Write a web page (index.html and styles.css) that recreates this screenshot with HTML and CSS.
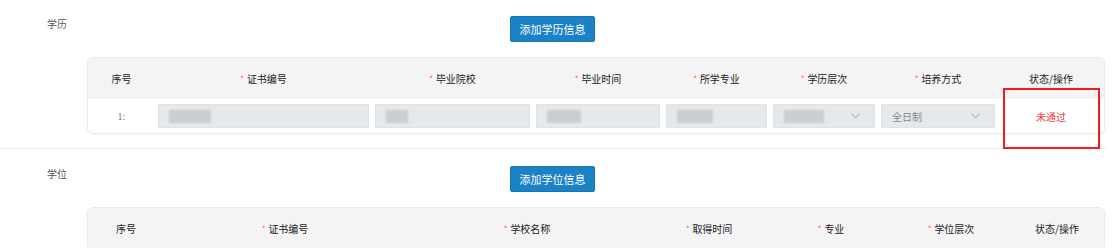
FILE: index.html
```html
<!DOCTYPE html>
<html>
<head>
    <meta charset="utf-8">
    <link rel="stylesheet" href="styles.css">
</head>
<body>
    <div class="page">
        <div class="section">
            <div class="section-head">
                <span class="section-label">学历</span>
                <button class="add-btn">添加学历信息</button>
            </div>
            <div class="card">
                <div class="grid grid-edu head">
                    <div class="cell">序号</div>
                    <div class="cell"><i>*</i>证书编号</div>
                    <div class="cell"><i>*</i>毕业院校</div>
                    <div class="cell"><i>*</i>毕业时间</div>
                    <div class="cell"><i>*</i>所学专业</div>
                    <div class="cell"><i>*</i>学历层次</div>
                    <div class="cell"><i>*</i>培养方式</div>
                    <div class="cell">状态/操作</div>
                </div>
                <div class="grid grid-edu row">
                    <div class="cell idx">1:</div>
                    <div class="cell"><div class="field"><span class="mosaic w42"></span></div></div>
                    <div class="cell"><div class="field"><span class="mosaic w22"></span></div></div>
                    <div class="cell"><div class="field"><span class="mosaic w34"></span></div></div>
                    <div class="cell"><div class="field"><span class="mosaic w36"></span></div></div>
                    <div class="cell">
                        <div class="field select"><span class="mosaic w40"></span>
                            <svg class="chev" width="9" height="6" viewBox="0 0 9 6"><path d="M0.5 0.8 L4.5 4.8 L8.5 0.8" fill="none" stroke="#9a9a9a" stroke-width="1"/></svg>
                        </div>
                    </div>
                    <div class="cell">
                        <div class="field select"><span class="val">全日制</span>
                            <svg class="chev" width="9" height="6" viewBox="0 0 9 6"><path d="M0.5 0.8 L4.5 4.8 L8.5 0.8" fill="none" stroke="#9a9a9a" stroke-width="1"/></svg>
                        </div>
                    </div>
                    <div class="cell status">未通过</div>
                </div>
            </div>
        </div>

        <div class="section">
            <div class="section-head">
                <span class="section-label">学位</span>
                <button class="add-btn">添加学位信息</button>
            </div>
            <div class="card">
                <div class="grid grid-deg head">
                    <div class="cell">序号</div>
                    <div class="cell"><i>*</i>证书编号</div>
                    <div class="cell"><i>*</i>学校名称</div>
                    <div class="cell"><i>*</i>取得时间</div>
                    <div class="cell"><i>*</i>专业</div>
                    <div class="cell"><i>*</i>学位层次</div>
                    <div class="cell">状态/操作</div>
                </div>
            </div>
        </div>

        <!-- annotation frame drawn over the status cell -->
        <div class="mark"></div>
    </div>
</body>
</html>
```

FILE: styles.css
```css
* {margin: 0; padding: 0; box-sizing: border-box;}
body {
    background: #fff;
    font-family: "Noto Sans CJK SC", "Liberation Sans", sans-serif;
    color: #333;
}

.page {
    width: 1105px;
    position: relative;
}

.section {
    padding: 16px 0 14px;
    border-bottom: 1px dotted #dcdcdc;
}
.section + .section {
    padding-top: 17px;
    border-bottom: none;
}

.section-head {
    display: grid;
    grid-template-columns: 1fr auto 1fr;
    align-items: start;
}

.section-label {
    padding-left: 47px;
    font-size: 10px;
    line-height: 16px;
    color: #555;
}

.add-btn {
    grid-column: 2;
    width: 85px;
    height: 26px;
    background: #1b82c6;
    border: 1px solid #1574b3;
    border-radius: 2px;
    color: #fff;
    font-family: inherit;
    font-size: 11px;
}

.card {
    margin: 15px 0 0 87px;
    width: 1018px;
    border: 1px solid #ebebeb;
    border-radius: 6px;
    overflow: hidden;
    box-shadow: 0 1px 2px rgba(0,0,0,0.04);
}

.grid {display: grid;}
.grid-edu {grid-template-columns: 67px 217px 161px 130px 107px 108px 120px 106px;}
.grid-deg {grid-template-columns: 76px 242px 242px 122px 122px 118px 94px;}

.head {
    height: 41px;
    background: #f4f4f4;
    align-items: center;
    font-size: 10px;
    color: #222;
}
.head .cell {text-align: center;}
.head i {
    font-style: normal;
    color: #f55;
    font-size: 8px;
    margin-right: 3px;
    vertical-align: 1px;
}

.row {
    height: 34px;
    align-items: center;
    background: #fff;
}
.row .cell {padding: 0 3px;}

.idx {
    text-align: center;
    font-family: "Liberation Serif", serif;
    font-size: 10px;
    color: #777;
    padding-left: 0;
}

.field {
    height: 24px;
    background: #e6e9ec;
    border: 1px solid #e0e3e6;
    display: flex;
    align-items: center;
    padding: 0 10px;
}
.select {justify-content: space-between;}
.select .chev {margin-right: 4px;}

.mosaic {
    height: 13px;
    background: #cbcdd0;
    filter: blur(1px);
}
.w22 {width: 22px;}
.w34 {width: 34px;}
.w36 {width: 36px;}
.w40 {width: 40px;}
.w42 {width: 42px;}

.val {
    font-size: 10px;
    color: #888;
}

.status {
    text-align: center;
    font-size: 10px;
    color: #f23c3c;
}

.mark {
    position: absolute;
    left: 1003px;
    top: 88px;
    width: 97px;
    height: 61px;
    border: 2px solid #f21c1c;
}
```
